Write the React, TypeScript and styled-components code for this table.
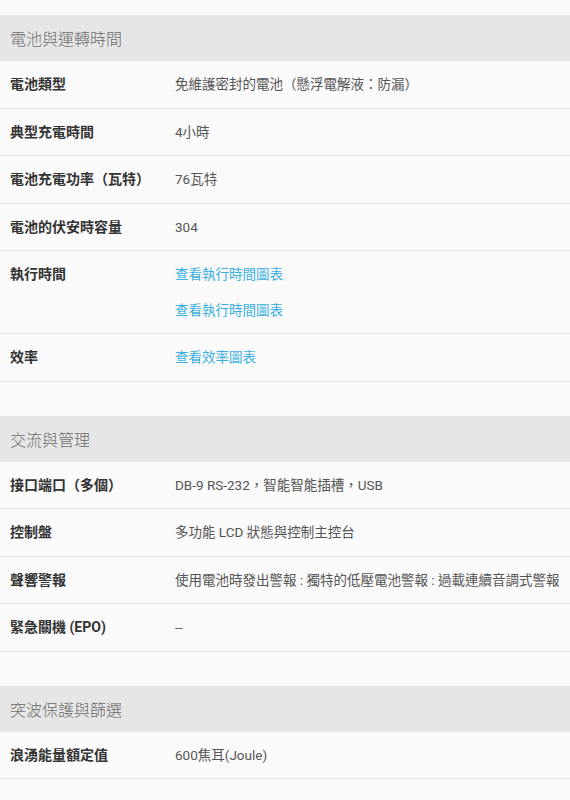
import React from 'react';
import styled, {createGlobalStyle} from 'styled-components';

type Row = {
    label: string;
    values?: string[];
    links?: string[];
};

type Section = {
    title: string;
    rows: Row[];
};

const sections: Section[] = [
    {
        title: '電池與運轉時間',
        rows: [
            {label: '電池類型', values: ['免維護密封的電池（懸浮電解液：防漏）']},
            {label: '典型充電時間', values: ['4小時']},
            {label: '電池充電功率（瓦特）', values: ['76瓦特']},
            {label: '電池的伏安時容量', values: ['304']},
            {label: '執行時間', links: ['查看執行時間圖表', '查看執行時間圖表']},
            {label: '效率', links: ['查看效率圖表']},
        ],
    },
    {
        title: '交流與管理',
        rows: [
            {label: '接口端口（多個）', values: ['DB-9 RS-232，智能智能插槽，USB']},
            {label: '控制盤', values: ['多功能 LCD 狀態與控制主控台']},
            {label: '聲響警報', values: ['使用電池時發出警報 : 獨特的低壓電池警報 : 過載連續音調式警報']},
            {label: '緊急關機 (EPO)', values: ['--']},
        ],
    },
    {
        title: '突波保護與篩選',
        rows: [
            {label: '浪湧能量額定值', values: ['600焦耳(Joule)']},
        ],
    },
];

const GlobalStyle = createGlobalStyle`
  html, body {
    margin: 0;
    padding: 0;
    background: #fafafa;
  }
  body {
    font-family: Roboto, "Noto Sans CJK TC", "Liberation Sans", sans-serif;
  }
`;

const Page = styled.div`
  display: flex;
  flex-direction: column;
  gap: 34px;
  padding-top: 15px;
  width: 570px;
`;

const SpecBlock = styled.section`
  display: flex;
  flex-direction: column;
`;

const SpecTitle = styled.div`
  height: 46px;
  display: flex;
  align-items: center;
  padding-left: 10px;
  background: #e6e6e6;
  color: #6b6b6b;
  font-size: 16px;
  font-weight: 300;
`;

const SpecRow = styled.div`
  display: grid;
  grid-template-columns: 165px 1fr;
  padding: 13px 0 13px 10px;
  border-bottom: 1px solid #e4e4e4;
  line-height: 20.5px;
`;

const Label = styled.div`
  font-size: 14px;
  font-weight: 700;
  color: #333;
`;

const Values = styled.div`
  display: flex;
  flex-direction: column;
  gap: 15px;
  font-size: 13.5px;
  color: #555;
  white-space: nowrap;
`;

const Link = styled.a`
  color: #3ab0e2;
  text-decoration: none;
  cursor: pointer;
`;

const App = () => {
    return (
        <>
            <GlobalStyle/>
            <Page>
                {sections.map(section => (
                    <SpecBlock key={section.title}>
                        <SpecTitle>{section.title}</SpecTitle>
                        {section.rows.map(row => (
                            <SpecRow key={row.label}>
                                <Label>{row.label}</Label>
                                <Values>
                                    {row.values?.map((v, i) => <span key={i}>{v}</span>)}
                                    {row.links?.map((l, i) => <Link key={i}>{l}</Link>)}
                                </Values>
                            </SpecRow>
                        ))}
                    </SpecBlock>
                ))}
            </Page>
        </>
    );
};

export default App;
